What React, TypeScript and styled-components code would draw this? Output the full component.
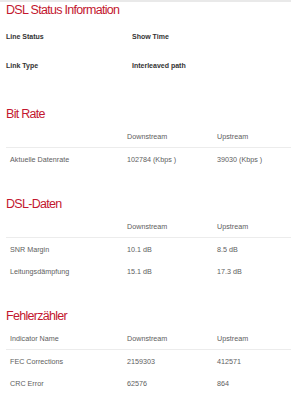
import React from "react";
import styled, { createGlobalStyle } from "styled-components";

const GlobalStyle = createGlobalStyle`
  html, body {
    margin: 0;
    padding: 0;
    background: #ffffff;
  }
  body {
    font-family: "Liberation Sans", Arial, sans-serif;
    -webkit-font-smoothing: antialiased;
  }
`;

const Page = styled.div`
  width: 291px;
  min-height: 400px;
  background: #fff;
  overflow: hidden;
`;

const TopStrip = styled.div`
  height: 2px;
  background: #e9e9e9;
`;

const Section = styled.section<{ $first?: boolean }>`
  padding-left: 6px;
  margin-top: ${(p) => (p.$first ? "0" : "26px")};
`;

const Title = styled.h2`
  margin: 0;
  font-family: "Liberation Sans", Arial, sans-serif;
  font-weight: 400;
  font-size: 12.5px;
  letter-spacing: -0.7px;
  line-height: 16px;
  color: #c3172f;
  white-space: nowrap;
`;

const InfoGrid = styled.div`
  display: grid;
  grid-template-columns: 126px 1fr;
  grid-auto-rows: 29px;
  align-items: center;
  margin-top: 4px;
`;

const InfoCell = styled.div`
  font-family: "Liberation Sans", Arial, sans-serif;
  font-weight: 700;
  font-size: 7px;
  color: #333;
  white-space: nowrap;
`;

const Table = styled.div`
  margin-top: 3px;
`;

const Row = styled.div<{ $head?: boolean }>`
  display: grid;
  grid-template-columns: 117px 90px 1fr;
  align-items: center;
  height: 22px;
  border-bottom: ${(p) => (p.$head ? "1px solid #ececec" : "none")};
`;

const Cell = styled.div`
  padding-left: 4px;
  font-family: "Liberation Sans", Arial, sans-serif;
  font-size: 7.2px;
  color: #5e5e5e;
  white-space: nowrap;
`;

type Data = { title: string; head: string[]; rows: string[][] };

const tables: Data[] = [
  {
    title: "Bit Rate",
    head: ["", "Downstream", "Upstream"],
    rows: [["Aktuelle Datenrate", "102784 (Kbps )", "39030 (Kbps )"]],
  },
  {
    title: "DSL-Daten",
    head: ["", "Downstream", "Upstream"],
    rows: [
      ["SNR Margin", "10.1 dB", "8.5 dB"],
      ["Leitungsdämpfung", "15.1 dB", "17.3 dB"],
    ],
  },
  {
    title: "Fehlerzähler",
    head: ["Indicator Name", "Downstream", "Upstream"],
    rows: [
      ["FEC Corrections", "2159303", "412571"],
      ["CRC Error", "62576", "864"],
    ],
  },
];

export default function App() {
  return (
    <Page>
      <GlobalStyle />
      <TopStrip />
      <Section $first>
        <Title>DSL Status Information</Title>
        <InfoGrid>
          <InfoCell>Line Status</InfoCell>
          <InfoCell>Show Time</InfoCell>
          <InfoCell>Link Type</InfoCell>
          <InfoCell>Interleaved path</InfoCell>
        </InfoGrid>
      </Section>
      {tables.map((t) => (
        <Section key={t.title}>
          <Title>{t.title}</Title>
          <Table>
            <Row $head>
              {t.head.map((h, i) => (
                <Cell key={i}>{h}</Cell>
              ))}
            </Row>
            {t.rows.map((r, i) => (
              <Row key={i}>
                {r.map((c, j) => (
                  <Cell key={j}>{c}</Cell>
                ))}
              </Row>
            ))}
          </Table>
        </Section>
      ))}
    </Page>
  );
}
